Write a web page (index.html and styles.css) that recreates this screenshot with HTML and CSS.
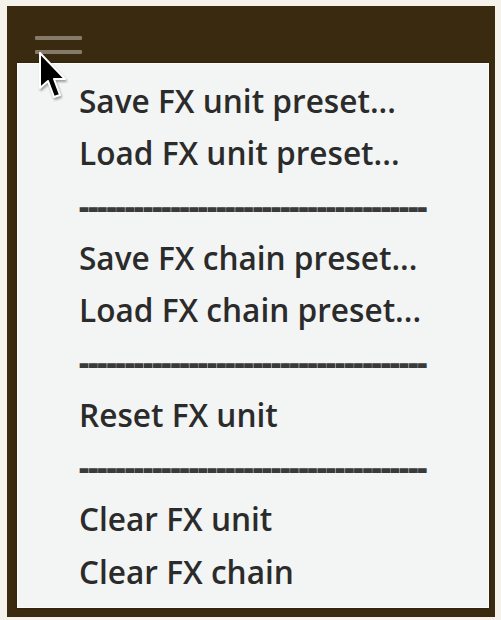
FILE: index.html
```html
<!DOCTYPE html>
<html lang="en">
<head>
    <meta charset="UTF-8">
    <title>FX unit menu</title>
    <link rel="stylesheet" href="styles.css">
</head>
<body>
    <!-- FX unit panel -->
    <div class="fx-panel">
        <div class="fx-topbar">
            <div class="hamburger">
                <span></span>
                <span></span>
            </div>
        </div>

        <!-- preset menu -->
        <ul class="fx-menu">
            <li class="menu-item">Save FX unit preset...</li>
            <li class="menu-item">Load FX unit preset...</li>
            <li class="menu-sep">--------------------------------------</li>
            <li class="menu-item">Save FX chain preset...</li>
            <li class="menu-item">Load FX chain preset...</li>
            <li class="menu-sep">--------------------------------------</li>
            <li class="menu-item">Reset FX unit</li>
            <li class="menu-sep">--------------------------------------</li>
            <li class="menu-item">Clear FX unit</li>
            <li class="menu-item">Clear FX chain</li>
        </ul>

        <!-- mouse pointer -->
        <svg class="pointer" width="34" height="52" viewBox="0 0 34 52">
            <path d="M3 2 L3 37 L11 30 L17 46 L23 44 L17 28 L28 28 Z" fill="#000" stroke="#fff" stroke-width="2" stroke-linejoin="round"/>
        </svg>
    </div>
</body>
</html>
```

FILE: styles.css
```css
/* ========= reset ========= */
* {
    margin: 0;
    padding: 0;
    box-sizing: border-box;
}

body {
    background: #f4f2ea;
    font-family: "Open Sans", "Liberation Sans", sans-serif;
    padding: 6px 6px 3px 7px;
}

/* ========= panel ========= */
.fx-panel {
    position: relative;
    background: #3a2a10;
    padding: 0 6px 9px 10px;
    height: 611px;
}

.fx-topbar {
    height: 57px;
    padding: 30px 0 0 18px;
}

.hamburger {
    width: 47px;
    display: flex;
    flex-direction: column;
    gap: 10px;
}

.hamburger span {
    display: block;
    height: 4px;
    background: #85796a;
    border-radius: 1px;
}

/* ========= menu ========= */
.fx-menu {
    list-style: none;
    background: #f3f5f4;
    border: 1px solid #fbfbfa;
    box-shadow: 0 0 2px rgba(0,0,0,0.4);
    height: 545px;
    padding: 11px 0 0 61px;
    color: #2b2b2b;
    font-weight: 600;
    font-size: 31.6px;
    line-height: 52.3px;
}

.menu-item {
    white-space: nowrap;
}

.menu-sep {
    white-space: nowrap;
    font-weight: 800;
    letter-spacing: -0.9px;
    color: #3a3a3a;
}

.pointer {
    position: absolute;
    left: 30px;
    top: 45px;
    filter: drop-shadow(1px 2px 1px rgba(0,0,0,0.35));
}
```
